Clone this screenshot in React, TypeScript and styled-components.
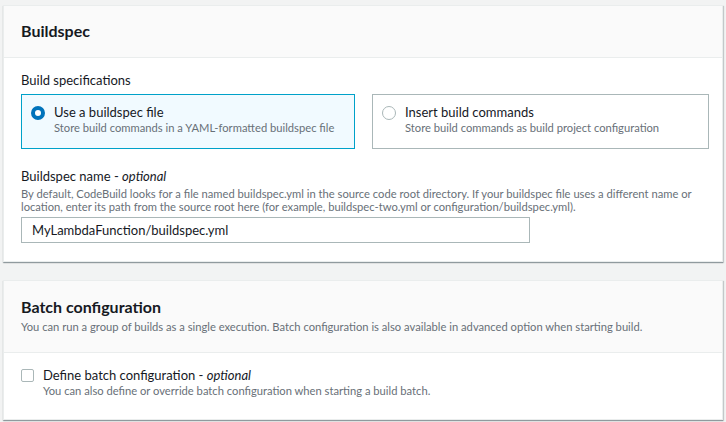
import { createGlobalStyle, styled } from 'styled-components';

const GlobalStyle = createGlobalStyle`
  html, body {
    margin: 0;
    padding: 0;
    background: #f2f3f3;
    font-family: Lato, "Liberation Sans", sans-serif;
    color: #16191f;
  }
`;

// page wrapper

const Page = styled.div`
  display: flex;
  flex-direction: column;
  gap: 18px;
  padding: 5px 3px 2px 3px;
`;

// card

const Card = styled.section`
  background: #ffffff;
  border: 1px solid #eaeded;
  box-shadow: 0 1px 1px 0 rgba(0, 28, 36, 0.3), 1px 1px 1px 0 rgba(0, 28, 36, 0.15);
`;

const CardHeader = styled.header<{ $tall?: boolean }>`
  background: #fafafa;
  border-bottom: 1px solid #eaeded;
  padding: ${({ $tall }) => ($tall ? '16px 17px 17px' : '15px 17px 16px')};
`;

const Title = styled.h2`
  margin: 0;
  font-size: 16px;
  line-height: 20px;
  font-weight: 700;
  color: #16191f;
`;

const HeaderDesc = styled.p`
  margin: 2px 0 0;
  font-size: 11.2px;
  line-height: 16px;
  color: #687078;
`;

const CardBody = styled.div`
  display: flex;
  flex-direction: column;
  padding: 13px 17px 18px;
`;

// form fields

const Label = styled.div`
  font-size: 13px;
  line-height: 18px;
  color: #16191f;

  & > em {
    font-style: italic;
  }
`;

const FieldDesc = styled.p`
  margin: 2px 0 0;
  font-size: 11.2px;
  line-height: 13px;
  color: #687078;
`;

const Field = styled.div<{ $mt?: number }>`
  display: flex;
  flex-direction: column;
  margin-top: ${({ $mt }) => $mt ?? 0}px;
`;

// radio tiles

const Tiles = styled.div`
  display: grid;
  grid-template-columns: 334px 337px;
  gap: 17px;
  margin-top: 5px;
`;

const Tile = styled.label<{ $selected?: boolean }>`
  display: flex;
  align-items: flex-start;
  gap: 9px;
  height: 55px;
  box-sizing: border-box;
  padding: 8px 9px;
  border: 1px solid ${({ $selected }) => ($selected ? '#00a1c9' : '#aab7b8')};
  background: ${({ $selected }) => ($selected ? '#f1faff' : '#ffffff')};
  cursor: pointer;
`;

const Radio = styled.span<{ $checked?: boolean }>`
  flex: none;
  width: 14px;
  height: 14px;
  margin-top: 3px;
  box-sizing: border-box;
  border-radius: 50%;
  border: ${({ $checked }) => ($checked ? '4px solid #0073bb' : '1px solid #aab7b8')};
  background: #ffffff;
`;

const TileText = styled.div`
  display: flex;
  flex-direction: column;
`;

const TileTitle = styled.span`
  font-size: 13px;
  line-height: 18px;
  color: #16191f;
`;

const TileDesc = styled.span`
  font-size: 11.2px;
  line-height: 14px;
  white-space: nowrap;
  color: #687078;
`;

// text input

const Input = styled.input`
  width: 509px;
  height: 26px;
  box-sizing: border-box;
  margin-top: 4px;
  padding: 0 10px;
  border: 1px solid #aab7b8;
  font-family: inherit;
  font-size: 13px;
  color: #16191f;
  outline: none;
`;

// checkbox row

const CheckRow = styled.label`
  display: flex;
  align-items: flex-start;
  gap: 9px;
`;

const Checkbox = styled.span`
  flex: none;
  width: 13px;
  height: 13px;
  margin-top: 3px;
  box-sizing: border-box;
  border: 1px solid #aab7b8;
  border-radius: 2px;
  background: #ffffff;
`;

const CheckBody = styled(CardBody)`
  padding: 13px 17px 21px;
`;

export default function App() {
  return (
    <>
      <GlobalStyle />
      <Page>
        <Card>
          <CardHeader>
            <Title>Buildspec</Title>
          </CardHeader>
          <CardBody>
            <Label>Build specifications</Label>
            <Tiles>
              <Tile $selected>
                <Radio $checked />
                <TileText>
                  <TileTitle>Use a buildspec file</TileTitle>
                  <TileDesc>Store build commands in a YAML-formatted buildspec file</TileDesc>
                </TileText>
              </Tile>
              <Tile>
                <Radio />
                <TileText>
                  <TileTitle>Insert build commands</TileTitle>
                  <TileDesc>Store build commands as build project configuration</TileDesc>
                </TileText>
              </Tile>
            </Tiles>
            <Field $mt={18}>
              <Label>
                Buildspec name - <em>optional</em>
              </Label>
              <FieldDesc>
                By default, CodeBuild looks for a file named buildspec.yml in the source code root directory. If your
                buildspec file uses a different name or
                <br />
                location, enter its path from the source root here (for example, buildspec-two.yml or
                configuration/buildspec.yml).
              </FieldDesc>
              <Input defaultValue="MyLambdaFunction/buildspec.yml" />
            </Field>
          </CardBody>
        </Card>

        <Card>
          <CardHeader $tall>
            <Title>Batch configuration</Title>
            <HeaderDesc>
              You can run a group of builds as a single execution. Batch configuration is also available in advanced
              option when starting build.
            </HeaderDesc>
          </CardHeader>
          <CheckBody>
            <CheckRow>
              <Checkbox />
              <TileText>
                <Label>
                  Define batch configuration - <em>optional</em>
                </Label>
                <TileDesc>You can also define or override batch configuration when starting a build batch.</TileDesc>
              </TileText>
            </CheckRow>
          </CheckBody>
        </Card>
      </Page>
    </>
  );
}
